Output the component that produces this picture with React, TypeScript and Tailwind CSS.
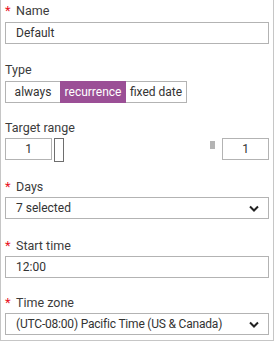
import React from "react";

const font = { fontFamily: 'Roboto, "Liberation Sans", sans-serif' };

function Label({ text, required }: { text: string; required?: boolean }) {
  return (
    <div className="flex items-center h-4 leading-4 text-[12.5px] text-[#3c3c3c] whitespace-nowrap">
      {required && <span className="text-[#e81123] w-[11px] text-[13px] leading-4">*</span>}
      <span>{text}</span>
    </div>
  );
}

function Chevron() {
  return (
    <svg width="10" height="7" viewBox="0 0 10 7" className="shrink-0">
      <path d="M1 1.5 L5 5.5 L9 1.5" fill="none" stroke="#222" strokeWidth="2" />
    </svg>
  );
}

export default function App() {
  return (
    <div style={font} className="w-[274px] h-[341px] bg-white border-x border-b border-[#c6c6c6] px-1 text-[#333] whitespace-nowrap text-[12px]">
      <div className="pt-[3px]">
        <Label text="Name" required />
        <div className="mt-[3px] h-[22px] border border-[#b3b3b3] flex items-center pl-[10px]">Default</div>
      </div>

      <div className="mt-[18px]">
        <Label text="Type" />
        <div className="mt-[3px] flex h-[22px]">
          <div className="w-[55px] border border-[#b3b3b3] border-r-0 flex items-center justify-center">always</div>
          <div className="w-[66px] bg-[#9b4f96] text-white flex items-center justify-center">recurrence</div>
          <div className="w-[61px] border border-[#b3b3b3] border-l-0 flex items-center justify-center">fixed date</div>
        </div>
      </div>

      <div className="mt-[17px]">
        <Label text="Target range" />
        <div className="mt-[2px] flex items-start h-[24px]">
          <div className="w-[47px] h-[22px] border border-[#b3b3b3] flex items-center justify-center">1</div>
          <div className="ml-[2px] w-[10px] h-[24px] border border-[#6e6e6e] bg-white" />
          <div className="flex-1" />
          <div className="mt-[3px] w-[5px] h-[8px] bg-[#b4b4b4]" />
          <div className="ml-[7px] w-[47px] h-[22px] border border-[#b3b3b3] flex items-center justify-center">1</div>
        </div>
      </div>

      <div className="mt-[17px]">
        <Label text="Days" required />
        <div className="mt-[2px] h-[22px] border border-[#b3b3b3] flex items-center justify-between pl-[10px] pr-[9px]">
          <span>7 selected</span>
          <Chevron />
        </div>
      </div>

      <div className="mt-[19px]">
        <Label text="Start time" required />
        <div className="mt-[2px] h-[22px] border border-[#b3b3b3] flex items-center pl-[10px]">12:00</div>
      </div>

      <div className="mt-[17px]">
        <Label text="Time zone" required />
        <div className="mt-[2px] h-[22px] border border-[#b3b3b3] flex items-center justify-between pl-[10px] pr-[9px]">
          <span className="tracking-[-0.2px]">(UTC-08:00) Pacific Time (US &amp; Canada)</span>
          <Chevron />
        </div>
      </div>
    </div>
  );
}
